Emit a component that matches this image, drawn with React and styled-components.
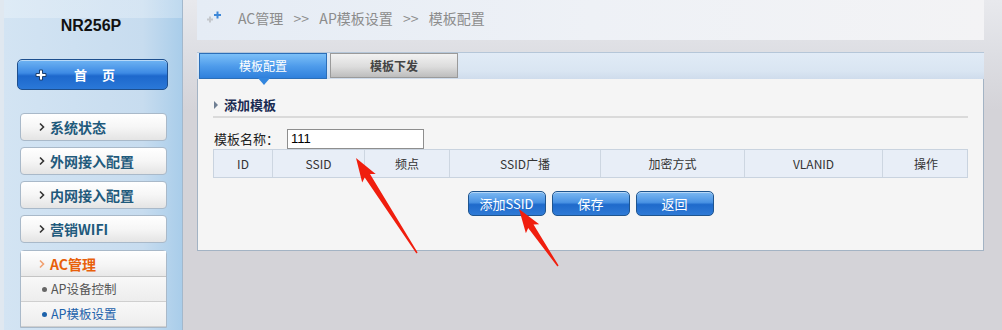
import React from "react";
import styled, { createGlobalStyle } from "styled-components";

const GlobalStyle = createGlobalStyle`
  html, body { margin: 0; padding: 0; }
  body {
    width: 1002px;
    height: 330px;
    overflow: hidden;
    background: #d4d3d8;
    font-family: "Noto Sans CJK SC", "Liberation Sans", sans-serif;
  }
  * { box-sizing: border-box; }
`;

const Page = styled.div`
  position: relative;
  display: flex;
  width: 1002px;
  height: 330px;
  overflow: hidden;
  background: linear-gradient(to bottom, #e8e9ed 0px, #dddee3 55px, #d4d3d8 110px);
`;

/* ---------- Sidebar ---------- */
const Sidebar = styled.aside`
  flex: none;
  width: 183px;
  height: 330px;
  border-left: 4px solid #e0e8f0;
  border-right: 1px solid #a3b8cc;
  background:
    linear-gradient(to bottom, rgba(255,255,255,0.25) 0, rgba(255,255,255,0.25) 18px, transparent 18px),
    linear-gradient(to right, #d3e4f3 0%, #c7dcef 78%, #a9cdea 100%);
  display: flex;
  flex-direction: column;
`;

const Brand = styled.div`
  padding-top: 17px;
  height: 35px;
  margin-bottom: 24px;
  text-align: center;
  font-family: "Liberation Sans", sans-serif;
  font-weight: bold;
  font-size: 16px;
  line-height: 18px;
  color: #111;
  padding-right: 4px;
`;

const HomeButton = styled.div`
  margin-left: 13px;
  width: 151px;
  height: 31px;
  border: 1px solid #1d4f8e;
  border-radius: 5px;
  background: linear-gradient(to bottom, #6fb4f3 0%, #3d8ae4 45%, #1d68cc 55%, #2a78d8 100%);
  box-shadow: inset 0 1px 0 rgba(255,255,255,0.5);
  display: flex;
  align-items: center;
  padding-left: 17px;
  color: #fff;
  font-weight: bold;
  font-size: 13px;
  line-height: 16px;
  margin-bottom: 23px;
`;

const HomeLabel = styled.span`
  margin-left: 27px;
  letter-spacing: 15px;
`;

const MenuItem = styled.div`
  margin-left: 16px;
  width: 147px;
  height: 28px;
  margin-bottom: ${(p) => p.$gap || 6}px;
  border: 1px solid #a9b9c9;
  border-radius: 4px;
  background: linear-gradient(to bottom, #ffffff 0%, #f6f6f6 50%, #e4e4e4 100%);
  display: flex;
  align-items: center;
  padding-left: 17px;
  font-weight: bold;
  font-size: 14px;
  line-height: 16px;
  color: #1f5a7c;
`;

const Chevron = ({ color }) => (
  <svg width="8" height="10" viewBox="0 0 8 10" style={{ marginRight: 4 }}>
    <path d="M2 1.5 L5.5 5 L2 8.5" fill="none" stroke={color} strokeWidth="1.6" />
  </svg>
);

const Group = styled.div`
  margin-left: 16px;
  width: 147px;
  border: 1px solid #a9b9c9;
  border-radius: 4px 4px 0 0;
  background: #f2f2f2;
`;

const GroupHead = styled.div`
  height: 26px;
  display: flex;
  align-items: center;
  padding-left: 17px;
  font-weight: bold;
  font-size: 14px;
  line-height: 16px;
  color: #e8600a;
  background: linear-gradient(to bottom, #ffffff 0%, #f4f4f4 60%, #e8e8e8 100%);
  border-bottom: 1px solid #c4c4c4;
`;

const SubItem = styled.div`
  height: 25px;
  display: flex;
  align-items: center;
  padding-left: 21px;
  font-size: 12.5px;
  line-height: 14px;
  color: ${(p) => (p.$active ? "#1d62ab" : "#555")};
  border-bottom: 1px solid #cfcfcf;
  background: linear-gradient(to bottom, #f8f8f8, #ededed);
`;

const Dot = styled.span`
  width: 5px;
  height: 5px;
  border-radius: 50%;
  margin-right: 4px;
  background: ${(p) => (p.$active ? "#1d62ab" : "#666")};
`;

/* ---------- Content ---------- */
const Content = styled.main`
  flex: none;
  margin-left: 14px;
  width: 787px;
  display: flex;
  flex-direction: column;
`;

const Breadcrumb = styled.div`
  height: 40px;
  margin-bottom: 12px;
  background: linear-gradient(to right, #e5ecf5 0%, #eef1f6 50%, #f3f3f5 100%);
  display: flex;
  align-items: center;
  padding-left: 8px;
  padding-bottom: 4px;
  font-size: 14px;
  line-height: 16px;
  color: #8c8c8c;
`;

const Crumbs = styled.span`
  margin-left: 13px;
  word-spacing: 2px;
  white-space: pre;
`;

const Panel = styled.section`
  display: flex;
  flex-direction: column;
`;

const TabBar = styled.div`
  height: 27px;
  border-top: 1px solid #b5c6d8;
  background: linear-gradient(to bottom, #e1ebf6 0%, #d9e5f2 70%, #cfdcec 100%);
  display: flex;
  align-items: flex-start;
  padding-left: 2px;
  gap: 3px;
`;

const Tab = styled.div`
  position: relative;
  width: 128px;
  height: ${(p) => (p.$active ? 26 : 25)}px;
  display: flex;
  align-items: center;
  justify-content: center;
  font-size: 12px;
  line-height: 14px;
  border: 1px solid ${(p) => (p.$active ? "#2c6fb8" : "#9a9a9a")};
  color: ${(p) => (p.$active ? "#fff" : "#444")};
  font-weight: ${(p) => (p.$active ? "normal" : "bold")};
  background: ${(p) =>
    p.$active
      ? "linear-gradient(to bottom, #7cc0f8 0%, #4f9ceb 50%, #2f80dc 100%)"
      : "linear-gradient(to bottom, #f2f2f2 0%, #dcdcdc 55%, #bdbdbd 100%)"};
`;

const Pointer = styled.span`
  position: absolute;
  left: 58px;
  bottom: -7px;
  width: 0;
  height: 0;
  border-left: 6px solid transparent;
  border-right: 6px solid transparent;
  border-top: 7px solid #3286de;
`;

const Body = styled.div`
  height: 172px;
  background: #f5f5f5;
  border: 1px solid #a3b3c4;
  border-top: none;
  padding: 17px 15px 0 15px;
`;

const SectionTitle = styled.div`
  height: 22px;
  display: flex;
  align-items: center;
  font-weight: bold;
  font-size: 13px;
  line-height: 16px;
  color: #1a2b52;
  border-bottom: 2px solid #dadada;
  padding-left: 1px;
  padding-bottom: 3px;
`;

const Triangle = styled.span`
  width: 0;
  height: 0;
  border-top: 4px solid transparent;
  border-bottom: 4px solid transparent;
  border-left: 4px solid #6f7f93;
  margin-right: 6px;
`;

const FormRow = styled.div`
  margin-top: 11px;
  height: 20px;
  display: flex;
  align-items: center;
  font-size: 13px;
  line-height: 16px;
  color: #222;
  padding-left: 1px;
`;

const TextInput = styled.div`
  margin-left: 8px;
  width: 137px;
  height: 20px;
  border: 1px solid #8e8e8e;
  background: #fff;
  font-family: "Liberation Sans", sans-serif;
  font-size: 13px;
  line-height: 18px;
  padding-left: 3px;
  color: #000;
`;

const Table = styled.div`
  display: grid;
  grid-template-columns: 58px 92px 85px 151px 144px 138px 87px;
  width: 755px;
  height: 29px;
  border: 1px solid #c9d3df;
  background: #e8eef7;
`;

const HeadCell = styled.div`
  display: flex;
  align-items: center;
  justify-content: center;
  font-size: 12px;
  line-height: 14px;
  color: #333;
  border-left: ${(p) => (p.$first ? "none" : "1px solid #cdd6e1")};
`;

const Buttons = styled.div`
  margin-top: 13px;
  display: flex;
  justify-content: center;
  gap: 6px;
  width: 755px;
`;

const Button = styled.div`
  width: 78px;
  height: 25px;
  border: 1px solid #1f558f;
  border-radius: 5px;
  background: linear-gradient(to bottom, #7db9f2 0%, #4a93e4 45%, #1f6acb 55%, #2f7ad6 100%);
  box-shadow: inset 0 1px 0 rgba(255,255,255,0.45);
  display: flex;
  align-items: center;
  justify-content: center;
  color: #fff;
  font-size: 13px;
  line-height: 16px;
`;

/* ---------- Annotation arrows ---------- */
const Overlay = styled.svg`
  position: absolute;
  left: 0;
  top: 0;
  pointer-events: none;
`;

function arrowPoints(tx, ty, px, py) {
  const dx = px - tx, dy = py - ty;
  const len = Math.hypot(dx, dy);
  const ux = dx / len, uy = dy / len;
  const nx = -uy, ny = ux;
  const headLen = 24, headW = 8, baseW = 3.2, tailW = 0.7;
  const bx = px - ux * headLen, by = py - uy * headLen;
  const pts = [
    [px, py],
    [bx + nx * headW, by + ny * headW],
    [bx + nx * baseW + ux * 3, by + ny * baseW + uy * 3],
    [tx + nx * tailW, ty + ny * tailW],
    [tx - nx * tailW, ty - ny * tailW],
    [bx - nx * baseW + ux * 3, by - ny * baseW + uy * 3],
    [bx - nx * headW, by - ny * headW],
  ];
  return pts.map((p) => p.map((v) => v.toFixed(1)).join(",")).join(" ");
}

const columns = ["ID", "SSID", "频点", "SSID广播", "加密方式", "VLANID", "操作"];

export default function App() {
  return (
    <>
      <GlobalStyle />
      <Page>
        <Sidebar>
          <Brand>NR256P</Brand>
          <HomeButton>
            <svg width="12" height="12" viewBox="0 0 12 12">
              <path d="M4.5 1 H7.5 V4.5 H11 V7.5 H7.5 V11 H4.5 V7.5 H1 V4.5 H4.5 Z" fill="#fff" stroke="#1c3f6e" strokeWidth="1" />
            </svg>
            <HomeLabel>首页</HomeLabel>
          </HomeButton>
          <MenuItem><Chevron color="#333" />系统状态</MenuItem>
          <MenuItem><Chevron color="#333" />外网接入配置</MenuItem>
          <MenuItem><Chevron color="#333" />内网接入配置</MenuItem>
          <MenuItem $gap={7}><Chevron color="#333" />营销WIFI</MenuItem>
          <Group>
            <GroupHead><Chevron color="#f0a070" />AC管理</GroupHead>
            <SubItem><Dot />AP设备控制</SubItem>
            <SubItem $active><Dot $active />AP模板设置</SubItem>
          </Group>
        </Sidebar>

        <Content>
          <Breadcrumb>
            <svg width="20" height="14" viewBox="0 0 20 14">
              <path d="M2 8.5 H8 M5 5.5 V11.5" stroke="#c4c7cc" strokeWidth="2" />
              <path d="M9 4 H16 M12.5 0.5 V7.5" stroke="#3e88d8" strokeWidth="2" />
            </svg>
            <Crumbs>{"AC管理  >>  AP模板设置  >>  模板配置"}</Crumbs>
          </Breadcrumb>
          <Panel>
            <TabBar>
              <Tab $active>
                模板配置
                <Pointer />
              </Tab>
              <Tab>模板下发</Tab>
            </TabBar>
            <Body>
              <SectionTitle>
                <Triangle />
                添加模板
              </SectionTitle>
              <FormRow>
                模板名称：
                <TextInput>111</TextInput>
              </FormRow>
              <Table>
                {columns.map((c, i) => (
                  <HeadCell key={c} $first={i === 0}>{c}</HeadCell>
                ))}
              </Table>
              <Buttons>
                <Button>添加SSID</Button>
                <Button>保存</Button>
                <Button>返回</Button>
              </Buttons>
            </Body>
          </Panel>
        </Content>

        <Overlay width="1002" height="330" viewBox="0 0 1002 330">
          <polygon points={arrowPoints(417, 253, 356, 158)} fill="#f01e0e" />
          <polygon points={arrowPoints(558, 266, 519, 209)} fill="#f01e0e" />
        </Overlay>
      </Page>
    </>
  );
}
